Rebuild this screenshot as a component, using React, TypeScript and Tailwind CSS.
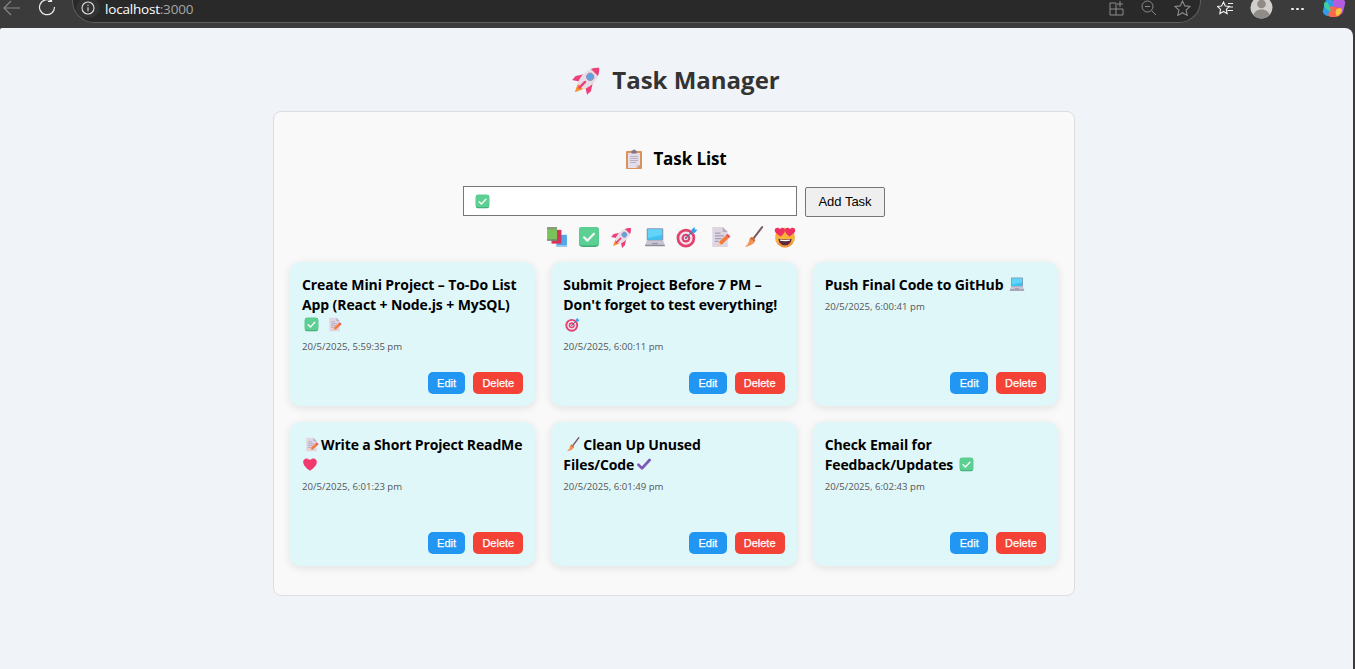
import React from "react";

type P = { s?: number; className?: string };
const Svg = ({ s = 20, className = "", children }: P & { children: React.ReactNode }) => (
  <svg width={s} height={s} viewBox="0 0 20 20" className={`inline-block shrink-0 ${className}`}>{children}</svg>
);

const Check = (p: P) => (
  <Svg {...p}>
    <rect x="1" y="1" width="18" height="18" rx="3" fill="#3fa976" />
    <rect x="1" y="1" width="18" height="16.8" rx="3" fill="#5ccf93" />
    <path d="M5.500 10.300l3 3 6-6.300" fill="none" stroke="#f4f8f6" strokeWidth="2" strokeLinecap="round" strokeLinejoin="round" />
  </Svg>
);
const Books = (p: P) => (
  <Svg {...p}>
    <rect x="9.500" y="8" width="9.500" height="11" fill="#4fa8e8" />
    <rect x="9.500" y="17.500" width="9.500" height="1.500" fill="#a9cdea" />
    <rect x="5" y="3.500" width="9" height="12.500" fill="#d9305e" />
    <rect x="1" y="1" width="9" height="11.500" fill="#78c257" />
    <rect x="1" y="1" width="9" height="2" fill="#8d9a7f" />
    <rect x="1" y="12" width="9" height="1.500" fill="#6b8f6b" />
  </Svg>
);
const Rocket = (p: P) => (
  <Svg {...p}>
    <g transform="rotate(45 10 10)">
      <path d="M7.500 16h5l-1 2.500-1.500 3-1.500-3z" fill="#f59331" />
      <path d="M6.300 8L2.800 13.500 3 17l3.800-2.500zM13.700 8l3.500 5.500L17 17l-3.800-2.500z" fill="#ee3f7a" />
      <path d="M10-1.500C13.500 1.500 15 6 14.500 10c-.2 2-.8 4-1.500 6H7c-.7-2-1.300-4-1.500-6C5 6 6.500 1.500 10-1.500z" fill="#e6dfe8" />
      <path d="M10-1.500C11.500-.2 12.600 1.300 13.300 3H6.700C7.400 1.300 8.500-.2 10-1.500z" fill="#ee3f7a" />
      <circle cx="10" cy="7" r="2.300" fill="#5aa5e6" stroke="#9b8fb0" strokeWidth=".8" />
      <rect x="9.200" y="11" width="1.600" height="7" rx=".8" fill="#ee3f7a" />
    </g>
  </Svg>
);
const Laptop = (p: P) => (
  <Svg {...p}>
    <rect x="2.500" y="2" width="15" height="11.500" rx="1" fill="#8d93ad" />
    <rect x="3.500" y="3" width="13" height="9.500" fill="#3cc3f2" />
    <path d="M3.500 3h13v5L3.500 11z" fill="#62d4f8" />
    <path d="M2.500 13.500h15l1.500 4H1z" fill="#c7c5d2" />
    <rect x="1" y="17" width="18" height="1.500" rx=".5" fill="#8f8da0" />
    <rect x="7.500" y="15.500" width="5" height="1" fill="#8f8da0" />
  </Svg>
);
const Target = (p: P) => (
  <Svg {...p}>
    <circle cx="9" cy="11" r="8.500" fill="#e2416f" />
    <circle cx="9" cy="11" r="6" fill="#efe6ee" />
    <circle cx="9" cy="11" r="4" fill="#e2416f" />
    <circle cx="9" cy="11" r="2" fill="#efe6ee" />
    <circle cx="9" cy="11" r="1" fill="#e2416f" />
    <path d="M9 11l7-7" stroke="#4c6f96" strokeWidth="1.200" />
    <path d="M14 3.500l2.800-2.500.4 2.200 2.300.3L17 6.300l-2.600-.5z" fill="#35a4ee" />
  </Svg>
);
const Memo = (p: P) => (
  <Svg {...p}>
    <path d="M3 1h9.500L17 5.500V19H3z" fill="#dfd6e4" />
    <path d="M12.500 1L17 5.500h-4.500z" fill="#b8aec2" />
    <path d="M5.500 6.500h5M5.500 9h8M5.500 11.500h6M5.500 14h3" stroke="#a79db3" strokeWidth="1" />
    <path d="M8.500 17.500l1-3.500 7-6.500 2.500 2.500-7 6.500z" fill="#f47a3a" />
    <path d="M15.500 8.500l1.500-1.500 2.500 2.500-1.500 1.500z" fill="#ef4f6f" />
    <path d="M8.500 17.500l.7-2.500 1.800 1.800z" fill="#f7d7b0" />
  </Svg>
);
const Broom = (p: P) => (
  <Svg {...p}>
    <path d="M18.300 1L10 12" stroke="#7d5a5f" strokeWidth="1.800" strokeLinecap="round" />
    <path d="M8.200 10.200c1.800.2 3.300 1.300 3.800 3-.8 2.500-3 4.800-9.500 5.800 2.200-1.800 3.200-3.200 3.800-5.200.3-1.600.9-2.900 1.900-3.600z" fill="#f59555" />
    <path d="M8.200 10.200c1.800.2 3.300 1.300 3.800 3l-1.200 1.200c-.7-1.300-2-2.300-3.800-2.600z" fill="#c96b3c" />
  </Svg>
);
const HeartEyes = (p: P) => (
  <Svg {...p}>
    <circle cx="10" cy="10.500" r="9" fill="#f8b23b" />
    <path d="M1 10.500a9 9 0 0018 0c-1 6-4 5-9 5s-8 1-9-5z" fill="#ee8a3a" opacity=".7" />
    <path d="M4 11.500c4 1 8 1 12 0-.2 3.700-2.800 6-6 6s-5.800-2.300-6-6z" fill="#5c2a3c" />
    <path d="M5.300 12.200c3 .6 6.400 .6 9.400 0l-.4 1.300c-2.800 .4-5.800 .4-8.600 0z" fill="#fff" />
    <path d="M6 9.500C3.500 8 .5 6.200 .7 3.700.9 1.500 4 .7 5.400 3 6.500.8 10 1.200 10 3.900 10 6.500 7.800 8 6 9.500z" fill="#ef2f5f" />
    <path d="M14 9.500c-1.800-1.500-4-3-4-5.600C10 1.200 13.500 .8 14.600 3c1.400-2.300 4.500-1.500 4.700 .7.200 2.500-2.800 4.300-5.300 5.800z" fill="#ef2f5f" />
  </Svg>
);
const Clipboard = (p: P) => (
  <Svg {...p}>
    <rect x="2" y="2" width="16" height="18" rx="1" fill="#d9925c" />
    <path d="M4 4h12v12l-3.500 3H4z" fill="#e4deea" />
    <path d="M12.500 19v-3H16z" fill="#c9bfd0" />
    <path d="M6 7.500h8M6 9.500h8M6 11.500h8M6 13.500h6" stroke="#b3aabb" strokeWidth=".9" />
    <path d="M7.500 1.500h1.200a1.400 1.400 0 012.600 0h1.200V4.500h-5z" fill="#7f7488" />
  </Svg>
);
const Heart = (p: P) => (
  <Svg {...p}>
    <path d="M10 18.500C6 15.500 1.500 12 1.500 7.200 1.500 3 6.800 1.400 10 5c3.200-3.600 8.500-2 8.500 2.200 0 4.800-4.500 8.300-8.500 11.300z" fill="#f1396d" />
    <path d="M4 4.500C6 3 8.600 3.500 10 5c-1.800-.6-4-.8-6-.5z" fill="#f5768f" />
  </Svg>
);
const PurpleCheck = (p: P) => (
  <Svg {...p}>
    <path d="M3 11l4.500 4.500L17 5" fill="none" stroke="#7c56b8" strokeWidth="3.400" strokeLinecap="round" strokeLinejoin="round" />
  </Svg>
);

const E = ({ children, cls = "mx-[2px]" }: { children: React.ReactNode; cls?: string }) => (
  <span className={`inline-flex h-[14px] items-center align-[-2px] ${cls}`}>{children}</span>
);

type Task = { title: React.ReactNode; time: string };
const tasks: Task[] = [
  {
    title: (<>Create Mini Project – To-Do List App (React + Node.js + MySQL) <br /><E cls="ml-[2px] mr-[8px]"><Check s={15} /></E><E cls="mx-0"><Memo s={15} /></E></>),
    time: "20/5/2025, 5:59:35 pm",
  },
  {
    title: (<>Submit Project Before 7 PM – Don't forget to test everything! <br /><E cls="ml-[2px]"><Target s={15} /></E></>),
    time: "20/5/2025, 6:00:11 pm",
  },
  {
    title: (<>Push Final Code to GitHub <E cls="ml-[2px]"><Laptop s={16} /></E></>),
    time: "20/5/2025, 6:00:41 pm",
  },
  {
    title: (<><span className="whitespace-nowrap tracking-[-0.15px]"><E cls="ml-[2px] mr-[2px]"><Memo s={15} /></E>Write a Short Project ReadMe</span><br /><E cls="mx-0"><Heart s={16} /></E></>),
    time: "20/5/2025, 6:01:23 pm",
  },
  {
    title: (<><E cls="ml-[2px] mr-[3px]"><Broom s={15} /></E>Clean Up Unused<br />Files/Code<E cls="ml-[2px]"><PurpleCheck s={16} /></E></>),
    time: "20/5/2025, 6:01:49 pm",
  },
  {
    title: (<>Check Email for<br />Feedback/Updates <E cls="ml-[2px]"><Check s={15} /></E></>),
    time: "20/5/2025, 6:02:43 pm",
  },
];

const sans = "font-['Open_Sans','Noto_Sans',sans-serif]";
const arial = "font-['Liberation_Sans',Arial,sans-serif]";

const Card = ({ t }: { t: Task }) => (
  <div className="flex h-[144px] flex-col justify-between rounded-[10px] bg-[#e0f7fa] px-[12px] pt-[13px] pb-[12px] shadow-[0_2px_8px_rgba(0,0,0,0.1)]">
    <div>
      <div className={`text-[14px] leading-[20px] font-bold tracking-[-0.1px] text-black ${sans}`}>{t.title}</div>
      <div className={`mt-[5px] text-[9.600px] leading-[14px] text-[#555] ${sans}`}>{t.time}</div>
    </div>
    <div className={`flex justify-end gap-[8px] text-[11px] text-white [-webkit-text-stroke:0.25px_white] ${arial}`}>
      <button className="h-[22px] w-[37.500px] rounded-[5px] bg-[#2196f3]">Edit</button>
      <button className="h-[22px] w-[50px] rounded-[5px] bg-[#f44336]">Delete</button>
    </div>
  </div>
);

const ChromeBar = () => (
  <div className="flex h-[28px] shrink-0 items-start bg-[#3b3b3b] text-[#dcdcdc]">
    <svg width="18" height="16" viewBox="0 0 18 16" className="ml-[3px] text-[#8a8a8a]" fill="none" stroke="currentColor" strokeWidth="1.100">
      <path d="M17 8H1M8 1L1 8l7 7" />
    </svg>
    <svg width="18" height="18" viewBox="0 0 18 18" className="mt-[-2px] ml-[17px]" fill="none" stroke="#ececec" strokeWidth="1.200">
      <path d="M13.500 3.200A7.500 7.500 0 1016.500 9M13.500 0v3.500H10" />
    </svg>
    <div className="ml-[16px] flex h-[23px] w-[1129px] items-center rounded-b-[22px] border-x border-b border-[#5e5e5e] bg-[#292929] pr-[9px] pb-[6px]">
      <div className="ml-[3px] flex h-[20px] w-[24px] items-center justify-center rounded-full bg-[#333]">
        <svg width="14" height="14" viewBox="0 0 14 14" fill="none" stroke="#e0e0e0" strokeWidth="1.100">
          <circle cx="7" cy="7" r="6" />
          <path d="M7 6.200v4M7 3.800v1.200" />
        </svg>
      </div>
      <div className={`mt-[2px] ml-[5px] text-[13.500px] leading-[16px] tracking-[-0.2px] text-white ${sans}`}>
        localhost<span className="text-[#a6a6a6]">:3000</span>
      </div>
      <div className="ml-auto flex items-center gap-[17px] text-[#8c8c8c]">
        <svg width="15" height="15" viewBox="0 0 15 15" fill="none" stroke="currentColor" strokeWidth="1">
          <path d="M1 2h6v12H1zM1 8h13v6H7M11 0v6M8 3h6" />
        </svg>
        <svg width="16" height="16" viewBox="0 0 16 16" fill="none" stroke="currentColor" strokeWidth="1">
          <circle cx="6.500" cy="6.500" r="5.500" />
          <path d="M10.500 10.500L15 15M4 6.500h5" />
        </svg>
        <svg width="17" height="16" viewBox="0 0 17 16" fill="none" stroke="currentColor" strokeWidth="1.100">
          <path d="M8.500 1l2.300 4.900 5.200.6-3.900 3.600 1.100 5.300-4.700-2.700-4.700 2.700 1.100-5.300L1 6.500l5.200-.6z" />
        </svg>
      </div>
    </div>
    <div className="mt-[-1px] ml-[16px] flex items-center">
      <svg width="17" height="16" viewBox="0 0 17 16" fill="none" stroke="#f0f0f0" strokeWidth="1.100">
        <path d="M6.500 1l1.800 4 4 .5-3 2.900.8 4.300-3.600-2.200-3.700 2.200.8-4.300-3-2.900 4-.5zM11 2.500h5M12.500 6h3.500M10.500 9.500H16" />
      </svg>
      <svg width="23" height="23" viewBox="0 0 23 23" className="mt-[-3px] ml-[16px]">
        <circle cx="11.500" cy="11.500" r="11" fill="#d2cfcb" />
        <circle cx="11.500" cy="8" r="4.300" fill="#8f8b87" />
        <path d="M3.500 19c1-4 4.500-5.500 8-5.500s7 1.500 8 5.500a11 11 0 01-16 0z" fill="#8f8b87" />
      </svg>
      <div className="ml-[18px] flex gap-[2px]">
        <span className="h-[2.500px] w-[3px] rounded-full bg-[#eee]" />
        <span className="h-[2.500px] w-[3px] rounded-full bg-[#eee]" />
        <span className="h-[2.500px] w-[3px] rounded-full bg-[#eee]" />
      </div>
      <svg width="24" height="22" viewBox="0 0 24 22" className="mt-[-3px] ml-[18px]">
        <path d="M4 3c1-3 5-3 6-1l5 11c1 3-1 6-4 6H7C3 19 0 16 1 13z" fill="#2f9de8" />
        <path d="M14 1h4c3 0 6 3 5 6l-2 8c-1 3-4 3-6 2L11 7c-1-3 1-6 3-6z" fill="#b45ce0" />
        <path d="M7 11c1-2 4-2 5-1l6 1c2 0 2 3 1 5-1 3-3 4-6 4H9c-3 0-3-3-2-5z" fill="#f9684b" />
        <path d="M2 6C4 4 6 5 7 8L9 14C7 14 3 12 2 9z" fill="#3ccfa0" />
        <path d="M15 12c2-1 4-1 5 0 0 3-2 6-5 7-2-1-2-5 0-7z" fill="#f9c33c" />
      </svg>
    </div>
  </div>
);

export default function App() {
  return (
    <div className="flex h-[669px] w-[1355px] flex-col overflow-hidden bg-[#3b3b3b]">
      <ChromeBar />
      <main className="mr-[2px] flex-1 rounded-tl-[2px] rounded-tr-[8px] bg-[#f0f4f8] pr-[5px]">
        <h1 className={`mt-[34px] flex h-[36px] items-center justify-center gap-[10px] pl-[4px] text-[24px] font-bold text-[#333] ${sans}`}>
          <Rocket s={30} />
          <span>Task Manager</span>
        </h1>
        <section className="mx-auto mt-[13px] w-[802px] rounded-[8px] border border-[#ddd] bg-[#f9f9f9] px-[16px] pt-[34px]">
          <h2 className={`flex h-[26px] items-center justify-center gap-[9px] pl-[3px] text-[17px] font-bold tracking-[-0.1px] text-black ${sans}`}>
            <Clipboard s={20} />
            <span>Task List</span>
          </h2>
          <div className="mt-[14px] flex items-start justify-center gap-[8px] pr-[1px]">
            <div className="flex h-[30px] w-[334px] items-center border border-[#767676] bg-white pl-[11px]">
              <Check s={15} />
            </div>
            <button className={`mt-[1px] h-[30px] w-[80px] rounded-[2px] border border-[#767676] bg-[#efefef] pl-[1px] text-[13px] text-black ${arial}`}>
              Add Task
            </button>
          </div>
          <div className="mt-[9px] flex items-center justify-center gap-[10.700px] pr-[6px]">
            <Books s={22} /><Check s={22} /><Rocket s={22} /><Laptop s={22} /><Target s={22} /><Memo s={22} /><Broom s={22} /><HeartEyes s={22} />
          </div>
          <div className="mt-[14px] grid grid-cols-3 gap-[16px] pb-[29px]">
            {tasks.map((t, i) => (<Card key={i} t={t} />))}
          </div>
        </section>
      </main>
    </div>
  );
}
